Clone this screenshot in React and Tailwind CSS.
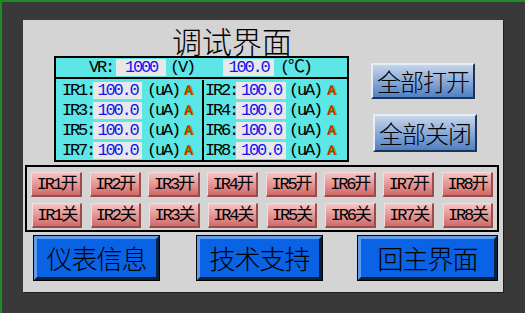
import React from "react";

const mono = "font-['Liberation_Mono','Noto_Sans_CJK_SC',monospace] text-[17px] leading-none tracking-[-2.2px]";
const cjk = "font-['Noto_Sans_CJK_SC',sans-serif]";

function Amark() {
  return (
    <span className="font-['Liberation_Sans',sans-serif] text-[13px] font-bold leading-none text-[#ff1010] [text-shadow:1px_0_0_#00c800,0_-1px_0_#00c800]">
      A
    </span>
  );
}

function Box({ children, w }) {
  return (
    <div
      className={`h-[17px] bg-[#e8e8e8] flex items-center justify-center text-[#1414f0] ${w}`}
    >
      {children}
    </div>
  );
}

function LeftRow({ n }) {
  return (
    <div className={`h-[20px] flex items-center ${mono} text-black`}>
      <span className="ml-[6px] w-[31px]">IR{n}:</span>
      <Box w="w-[49px]">100.0</Box>
      <span className="ml-[5px] w-[37px]">(uA)</span>
      <Amark />
    </div>
  );
}

function RightRow({ n }) {
  return (
    <div className={`h-[20px] flex items-center ${mono} text-black`}>
      <span className="ml-[1px] w-[31px]">IR{n}:</span>
      <Box w="w-[50px]">100.0</Box>
      <span className="ml-[3px] w-[38px]">(uA)</span>
      <Amark />
    </div>
  );
}

function Pink({ label }) {
  return (
    <div
      className={`h-[25px] flex items-center justify-center bg-linear-to-b from-[#f4c4c4] to-[#cf6a6a] border-t border-l border-[#f6dada] border-r-2 border-b-2 border-r-[#9c4a4a] border-b-[#9c4a4a] text-black ${mono}`}
    >
      {label}
    </div>
  );
}

function BlueBtn({ label, w }) {
  return (
    <div
      className={`h-[44px] ${w} shadow-[0_0_0_1px_#000] bg-[#0a62e4] border-[3px] border-t-[#5c9cec] border-l-[#5c9cec] border-r-[#06213f] border-b-[#06213f] flex items-center justify-center ${cjk} text-[26px] tracking-[-1px] font-light text-black leading-none`}
    >
      {label}
    </div>
  );
}

function LightBtn({ label, cls }) {
  return (
    <div
      className={`${cls} bg-linear-to-b from-[#c6d5ea] to-[#4f80c4] border-2 border-t-[#e4ecf4] border-l-[#e4ecf4] border-r-[#1c3556] border-b-[#1c3556] flex items-center justify-center ${cjk} text-[24px] tracking-[-1px] font-light text-black leading-none`}
    >
      {label}
    </div>
  );
}

export default function App() {
  const ons = [1, 2, 3, 4, 5, 6, 7, 8];
  return (
    <div className="w-[525px] h-[313px] bg-[#393939] border-t-2 border-l-2 border-[#1e8c24] overflow-hidden">
      <div className="ml-[21px] mt-[18px] w-[480px] h-[272px] bg-[#d4d4d4] shadow-[1px_1px_0_#1c1c1c] flex flex-col">
        {/* top section */}
        <div className="flex h-[142px]">
          <div className="ml-[31px] w-[295px] flex flex-col">
            <div className={`h-[36px] pt-[5px] pl-[118px] ${cjk} text-[30px] font-light leading-none text-black`}>
              调试界面
            </div>
            <div className="h-[106px] border-2 border-black bg-[#5ce6e5] flex flex-col">
              <div className={`h-[22px] border-b-2 border-black flex items-center ${mono} text-black`}>
                <span className="ml-[33px] w-[27px]">VR:</span>
                <Box w="w-[50px]">1000</Box>
                <span className="ml-[4px] w-[26px]">(V)</span>
                <div className="ml-[27px]">
                  <Box w="w-[51px]">100.0</Box>
                </div>
                <span className="ml-[6px] whitespace-nowrap">(℃)</span>
              </div>
              <div className="flex flex-1">
                <div className="w-[148px] border-r-2 border-black mt-[1px]">
                  <LeftRow n={1} />
                  <LeftRow n={3} />
                  <LeftRow n={5} />
                  <LeftRow n={7} />
                </div>
                <div className="flex-1 mt-[1px]">
                  <RightRow n={2} />
                  <RightRow n={4} />
                  <RightRow n={6} />
                  <RightRow n={8} />
                </div>
              </div>
            </div>
          </div>
          <div className="ml-[22px] pt-[43px] flex flex-col">
            <LightBtn label="全部打开" cls="w-[104px] h-[36px]" />
            <LightBtn label="全部关闭" cls="mt-[15px] ml-[2px] w-[104px] h-[38px]" />
          </div>
        </div>

        {/* IR grid */}
        <div className="mt-[3px] ml-[2px] w-[474px] h-[67px] border-2 border-black px-[4px] pt-[5px]">
          <div className="grid grid-cols-8 gap-x-[7.6px] gap-y-[6px]">
            {ons.map((n) => (
              <Pink key={"o" + n} label={`IR${n}开`} />
            ))}
            {ons.map((n) => (
              <div key={"c" + n} className="ml-[1px]">
                <Pink label={`IR${n}关`} />
              </div>
            ))}
          </div>
        </div>

        {/* bottom buttons */}
        <div className="mt-[4px] flex items-start">
          <div className="ml-[11px]">
            <BlueBtn label="仪表信息" w="w-[125px]" />
          </div>
          <div className="ml-[38px]">
            <BlueBtn label="技术支持" w="w-[125px]" />
          </div>
          <div className="ml-[36px]">
            <BlueBtn label="回主界面" w="w-[139px]" />
          </div>
        </div>
      </div>
    </div>
  );
}
